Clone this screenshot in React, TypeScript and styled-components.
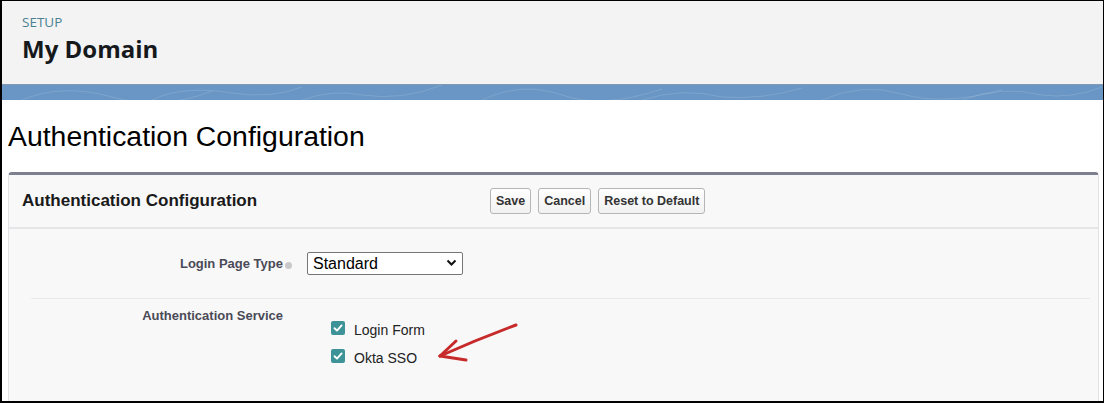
import styled, { createGlobalStyle } from 'styled-components';

const GlobalStyle = createGlobalStyle`
  body {
    margin: 0;
    background: #ffffff;
    font-family: 'Liberation Sans', Arial, sans-serif;
  }
`;

const Frame = styled.div`
  position: relative;
  width: 1104px;
  height: 403px;
  box-sizing: border-box;
  border-style: solid;
  border-color: #000000;
  border-width: 1px 1px 2px 2px;
  background: #ffffff;
  overflow: hidden;
`;

const SetupHeader = styled.header`
  height: 83px;
  box-sizing: border-box;
  padding: 12px 0 0 20px;
  background: #f3f3f4;
`;

const Crumb = styled.div`
  font-family: 'Open Sans', sans-serif;
  font-size: 13.5px;
  font-weight: 400;
  line-height: 18px;
  color: #4a8190;
`;

const PageName = styled.h1`
  margin: 3px 0 0;
  font-family: 'Open Sans', sans-serif;
  font-size: 24px;
  font-weight: 700;
  line-height: 30px;
  color: #16191c;
`;

const Band = styled.div`
  height: 15px;
  border-top: 1px solid #8297b0;
  background: #6a96c5;
  overflow: hidden;

  svg {
    display: block;
  }
`;

const PageTitle = styled.h2`
  margin: 0;
  padding: 20px 0 20px 6px;
  font-size: 28.4px;
  font-weight: 400;
  line-height: 32px;
  color: #000000;
`;

const Panel = styled.section`
  margin: 0 4px 0 6px;
  border-top: 3px solid #7d808f;
  border-left: 1px solid #e1e2e4;
  border-right: 1px solid #e1e2e4;
  border-radius: 4px 4px 0 0;
  background: #f8f8f9;
`;

const PanelHeader = styled.div`
  display: flex;
  align-items: center;
  height: 52px;
  border-bottom: 2px solid #e6e6e8;
  background: #f8f8f8;
`;

const PanelTitle = styled.h3`
  width: 468px;
  margin: 0;
  padding-left: 13px;
  font-size: 17px;
  font-weight: 700;
  color: #1a1a1a;
`;

const ButtonBar = styled.div`
  display: flex;
  gap: 7px;
`;

const Button = styled.button`
  height: 26px;
  padding: 0 5px;
  border: 1px solid #b5b5b5;
  border-radius: 3px;
  background: linear-gradient(#ffffff, #f1f1f1);
  font-family: 'Liberation Sans', Arial, sans-serif;
  font-size: 12.5px;
  font-weight: 700;
  color: #333333;
  cursor: pointer;
`;

const Row = styled.div<{ $top: number; $bottom: number }>`
  display: grid;
  grid-template-columns: 274px 1fr;
  column-gap: 24px;
  align-items: ${(p) => (p.$top > 15 ? 'center' : 'start')};
  padding: ${(p) => `${p.$top}px 0 ${p.$bottom}px`};
`;

const Divider = styled.hr`
  margin: 0 8px 0 22px;
  border: 0;
  border-top: 1px solid #e9e9eb;
`;

const Label = styled.div`
  text-align: right;
  font-size: 13px;
  font-weight: 700;
  line-height: 15px;
  color: #4a4a56;
`;

const HelpDot = styled.span`
  display: inline-block;
  width: 7px;
  height: 7px;
  margin: 0 -9px 0 2px;
  border-radius: 50%;
  background: #c9c9cc;
  vertical-align: -1px;
`;

const SelectWrap = styled.div`
  position: relative;
  width: 156px;
  height: 23px;

  svg {
    position: absolute;
    right: 6px;
    top: 7px;
    pointer-events: none;
  }
`;

const Select = styled.select`
  width: 100%;
  height: 100%;
  padding: 0 0 0 5px;
  border: 1px solid #767676;
  border-radius: 2px;
  background: #ffffff;
  appearance: none;
  font-family: 'Liberation Sans', Arial, sans-serif;
  font-size: 16px;
  color: #000000;
`;

const CheckList = styled.div`
  display: flex;
  flex-direction: column;
  padding: 8px 0 0 24px;
`;

const CheckItem = styled.label`
  display: flex;
  align-items: center;
  gap: 9px;
  height: 28px;
  font-size: 14px;
  color: #222222;
`;

const Box = styled.span`
  display: flex;
  align-items: center;
  justify-content: center;
  width: 14px;
  height: 14px;
  margin-top: -4px;
  border-radius: 2px;
  background: #3e9398;
`;

const Annotation = styled.svg`
  position: absolute;
  left: 428px;
  top: 314px;
`;

const Check = () => (
  <svg width="10" height="10" viewBox="0 0 10 10">
    <path d="M1.5 5.2 L4 7.6 L8.6 2.4" fill="none" stroke="#ffffff" strokeWidth="1.9" strokeLinecap="round" strokeLinejoin="round" />
  </svg>
);

const options = ['Login Form', 'Okta SSO'];

export default function App() {
  return (
    <>
      <GlobalStyle />
      <Frame>
        <SetupHeader>
          <Crumb>SETUP</Crumb>
          <PageName>My Domain</PageName>
        </SetupHeader>
        <Band>
          <svg width="1104" height="15" viewBox="0 0 1104 15">
            <g fill="none" stroke="rgba(255,255,255,0.13)" strokeWidth="1">
              <path d="M20 15 Q60 -2 110 12 T210 6" />
              <path d="M150 15 Q180 0 230 8 Q270 14 300 2" />
              <path d="M300 15 Q330 4 360 10 Q400 16 440 0" />
              <path d="M480 15 Q520 -4 560 10 T660 4" />
              <path d="M640 15 Q680 2 720 12 Q760 15 800 3" />
              <path d="M820 15 Q860 -3 900 9 T1000 5" />
              <path d="M960 15 Q1000 0 1040 10 Q1070 14 1100 2" />
            </g>
          </svg>
        </Band>
        <PageTitle>Authentication Configuration</PageTitle>
        <Panel>
          <PanelHeader>
            <PanelTitle>Authentication Configuration</PanelTitle>
            <ButtonBar>
              <Button>Save</Button>
              <Button>Cancel</Button>
              <Button>Reset to Default</Button>
            </ButtonBar>
          </PanelHeader>
          <Row $top={23} $bottom={23}>
            <Label>
              Login Page Type
              <HelpDot />
            </Label>
            <SelectWrap>
              <Select defaultValue="Standard">
                <option>Standard</option>
              </Select>
              <svg width="11" height="8" viewBox="0 0 11 8">
                <path d="M1.5 1.5 L5.5 5.5 L9.5 1.5" fill="none" stroke="#111" strokeWidth="2" />
              </svg>
            </SelectWrap>
          </Row>
          <Divider />
          <Row $top={9} $bottom={40}>
            <Label>Authentication Service</Label>
            <CheckList>
              {options.map((o) => (
                <CheckItem key={o}>
                  <Box>
                    <Check />
                  </Box>
                  {o}
                </CheckItem>
              ))}
            </CheckList>
          </Row>
        </Panel>
        <Annotation width="95" height="52" viewBox="0 0 95 52">
          <g fill="none" stroke="#c62a2a" strokeWidth="3" strokeLinecap="round" strokeLinejoin="round">
            <path d="M86 10 Q48 24 10 41" />
            <path d="M10 41 L26 26" />
            <path d="M10 41 L36 45" />
          </g>
        </Annotation>
      </Frame>
    </>
  );
}
